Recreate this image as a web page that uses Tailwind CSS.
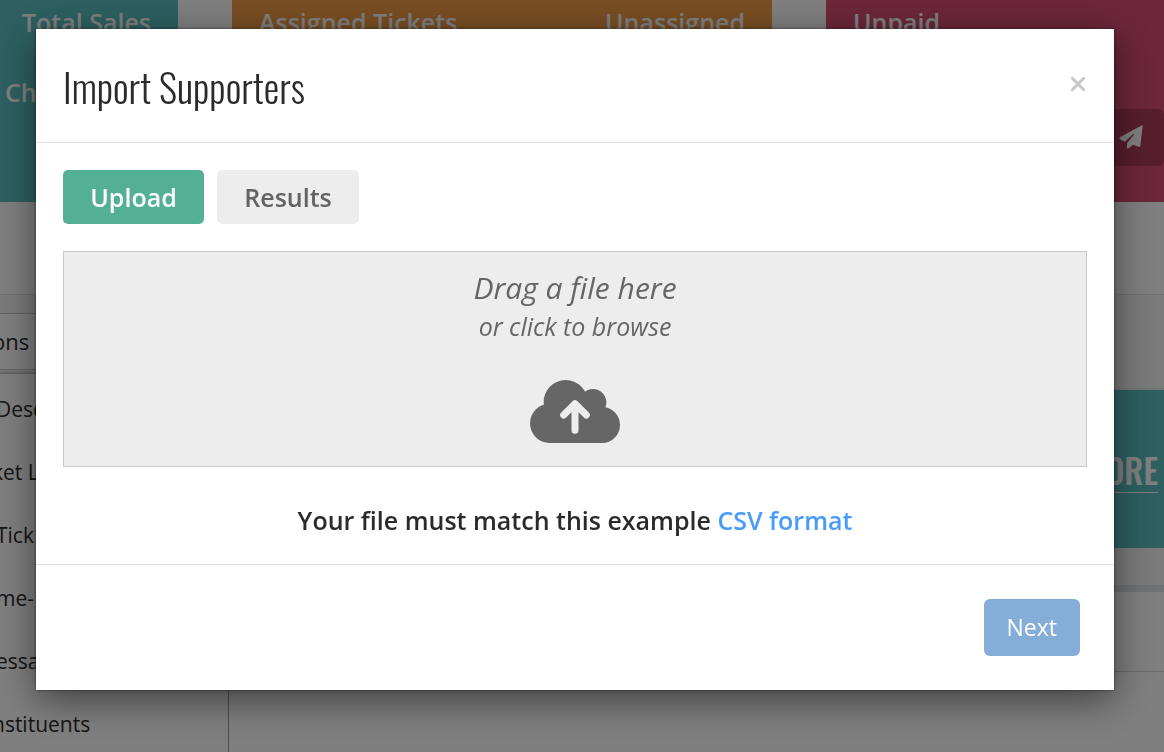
<!DOCTYPE html>
<html lang="en">

<head>
  <meta charset="utf-8">
  <meta name="viewport" content="width=device-width, initial-scale=1">
  <title>Import Supporters</title>
  <script src="https://cdn.jsdelivr.net/npm/@tailwindcss/browser@4"></script>
</head>

<body class="h-screen overflow-hidden bg-white font-['Open_Sans',sans-serif] text-[#2a2b2c]">
  <!-- dashboard -->
  <div class="flex h-screen flex-col overflow-hidden">
    <header class="flex h-[202px] shrink-0 gap-[54px] text-[25px] font-semibold text-white">
      <section class="w-[178px] shrink-0 bg-[#5cc0c2] pt-1">
        <h2 class="pr-[27px] text-right leading-9">Total Sales</h2>
        <p class="pl-[5px] pt-8 leading-10">Ch</p>
      </section>
      <section class="flex w-[540px] shrink-0 justify-between bg-[#f29c46] px-[27px] pt-1">
        <h2 class="leading-9">Assigned Tickets</h2>
        <h2 class="leading-9">Unassigned</h2>
      </section>
      <section class="flex-1 bg-[#d84e74] pt-1">
        <h2 class="pl-[27px] leading-9">Unpaid</h2>
        <div class="mt-[69px] flex justify-end">
          <button class="flex h-[57px] w-24 items-center justify-end rounded-md bg-[#b03b5b] pr-[21px] pb-0.5" aria-label="Send reminder">
            <svg class="size-6" viewBox="0 0 72 72" fill="currentColor">
              <path d="M69 1Q72 0 71 4L64 62Q63 67 59 65L42 59L29 70Q24 73 24 67V55L46 28Q47 25 43 27L17 50L3 43Q-1 40 3 37Z" />
            </svg>
          </button>
        </div>
      </section>
    </header>
    <div class="h-[93px] shrink-0 border-b border-[#e4e4e4]"></div>

    <div class="flex flex-1">
      <nav class="w-[229px] shrink-0 border-r border-[#b8babd] bg-[#f6f6f6] pt-[18px] text-[21px]">
        <div class="h-[57px] border-y border-[#c8c8c8] bg-white leading-[54px]"><a href="#" class="-ml-2 text-[22px]">ons</a></div>
        <ul class="mt-[3px] border-t border-[#c8c8c8] bg-white pt-1 leading-[63px] shadow-[0_0_3px_rgba(0,0,0,0.4)]">
          <li><a href="#" class="-ml-1">Desc</a></li>
          <li><a href="#" class="-ml-2">ket L</a></li>
          <li><a href="#" class="-ml-1">Tick</a></li>
          <li><a href="#" class="-ml-1">me-</a></li>
          <li><a href="#" class="-ml-1">essa</a></li>
          <li><a href="#" class="-ml-2">nstituents</a></li>
        </ul>
      </nav>
      <main class="flex-1 bg-[#f5f5f5]">
        <div class="h-[95px] border-b-2 border-[#e6e6e6]"></div>
        <div class="flex h-[158px] justify-end bg-[#5cc0c2] pr-[6px] pt-[58px] font-['Oswald',sans-serif] text-[34px] font-medium text-white">
          <a href="#" class="h-[45px] border-b border-white leading-[43px]">MORE</a>
        </div>
        <div class="h-[37px]"></div>
        <div class="h-[87px] border-t-[7px] border-b border-t-[#dfe3e8] border-b-[#d4d4d4] bg-white"></div>
        <div class="h-24 bg-white"></div>
      </main>
    </div>
  </div>

  <!-- modal -->
  <div class="fixed inset-0 bg-black/50 pt-[29px] pr-[50px] pl-9">
    <div role="dialog" aria-labelledby="modal-title" class="bg-white shadow-[0_10px_36px_rgba(0,0,0,0.5),0_0_3px_rgba(0,0,0,0.5)]">
      <header class="flex items-center justify-between border-b border-[#e2e2e2] px-[27px] pt-[27px] pb-[26px]">
        <h1 id="modal-title" class="font-['Oswald',sans-serif] text-[39px] leading-[60px] font-[340]">Import Supporters</h1>
        <button class="mb-1 p-px text-[#c9c9c9]" aria-label="Close">
          <svg class="size-4" viewBox="0 0 16 16" fill="none" stroke="currentColor" stroke-width="3" stroke-linecap="round">
            <path d="M2.3 2.3L13.7 13.7M13.7 2.3L2.3 13.7" />
          </svg>
        </button>
      </header>

      <div class="border-b border-[#e2e2e2] p-[27px] pb-6">
        <div class="flex gap-[13px] text-[25px] leading-[54px] font-semibold">
          <button class="w-[141px] rounded-[5px] bg-[#54b095] text-white">Upload</button>
          <button class="w-[142px] rounded-[5px] bg-[#ededed] text-[#636363]">Results</button>
        </div>

        <label for="file" class="mt-[27px] flex h-[216px] cursor-pointer flex-col items-center border border-[#c9c9c9] bg-[#ededed] pt-4 font-medium text-[#666] italic">
          <span class="text-[30px] leading-10">Drag a file here</span>
          <span class="text-[25px] leading-9">or click to browse</span>
          <svg class="mt-9 h-[63px] w-[90px]" viewBox="0 0 270 189">
            <g fill="#666">
              <circle cx="107" cy="66" r="66" />
              <circle cx="189" cy="67" r="40" />
              <circle cx="59" cy="130" r="59" />
              <circle cx="216" cy="135" r="54" />
              <path d="M59 80H216V189H59Z" />
            </g>
            <path d="M135 151V72M101 105L135 71L169 105" fill="none" stroke="#ededed" stroke-width="21" stroke-linecap="round" stroke-linejoin="round" />
          </svg>
          <input id="file" type="file" accept=".csv" class="sr-only">
        </label>

        <p class="mt-[35px] pb-0.5 text-center text-[25px] leading-9 font-semibold">
          Your file must match this example <a href="#" class="text-[#479bfa]">CSV format</a>
        </p>
      </div>

      <footer class="flex justify-end px-[34px] py-[34px]">
        <button class="rounded-md bg-[#84add8] px-[23px] text-[23px] leading-[57px] text-white">Next</button>
      </footer>
    </div>
  </div>
</body>

</html>
